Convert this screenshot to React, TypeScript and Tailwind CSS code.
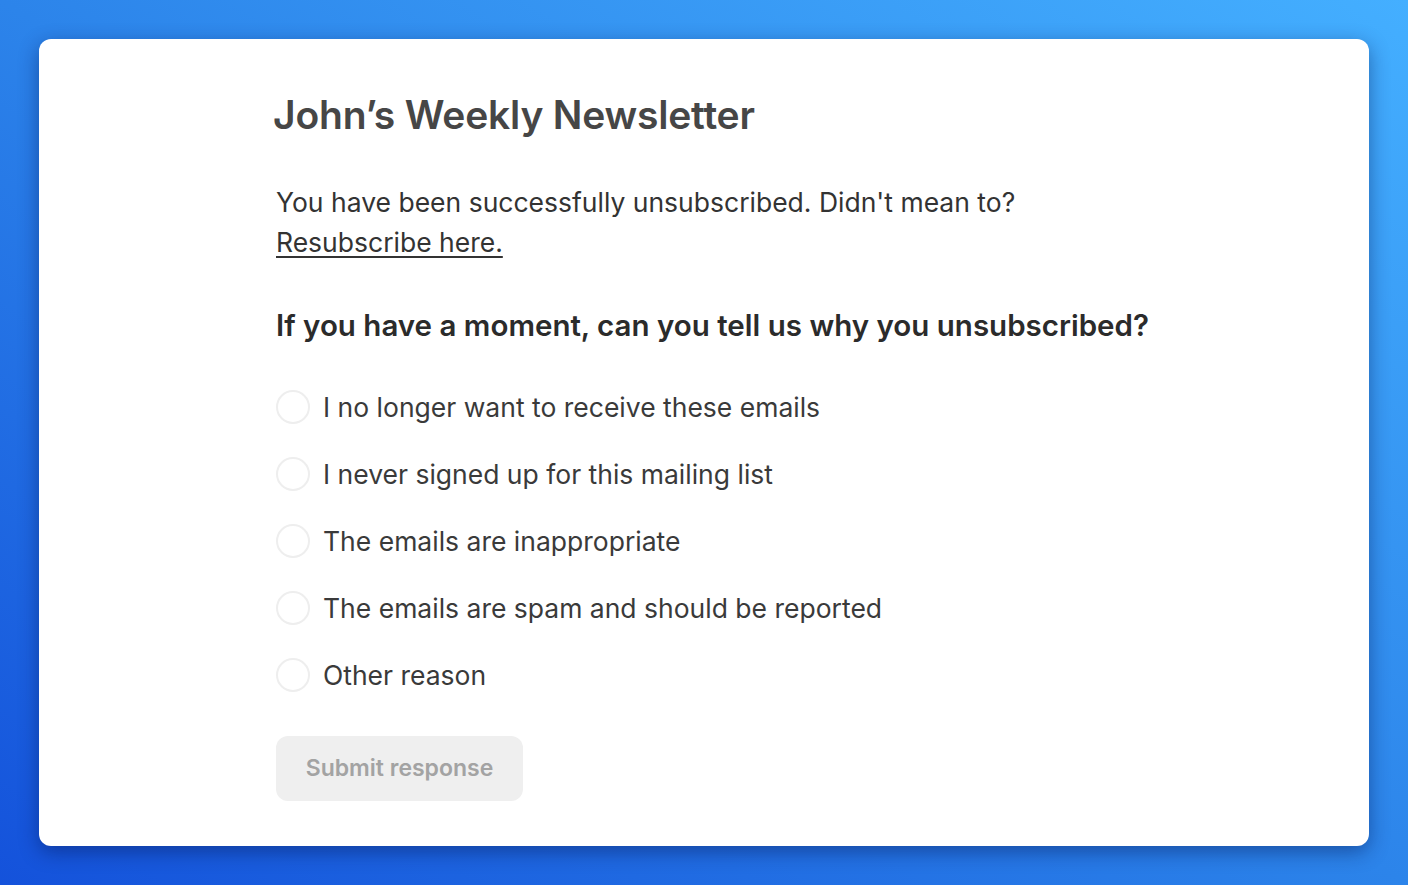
import React from "react";

const options = [
  "I no longer want to receive these emails",
  "I never signed up for this mailing list",
  "The emails are inappropriate",
  "The emails are spam and should be reported",
  "Other reason",
];

export default function App() {
  return (
    <div className="w-[1408px] h-[885px] bg-[linear-gradient(to_top_right,#1452db,#2c84ea_50%,#44afff)] pt-[39px] pl-[39px] font-['Inter','Noto_Sans',sans-serif]">
      <div className="w-[1330px] h-[807px] bg-white rounded-[12px] shadow-[0_6px_20px_rgba(5,20,80,0.45)] pl-[234px] pt-[52px]">
        <h1 className="text-[39px] leading-[48px] font-semibold text-[#464646] tracking-[-0.2px]">
          John’s Weekly Newsletter
        </h1>
        <p className="mt-[43px] ml-[3px] text-[26.5px] leading-[40px] text-[#333333]">
          You have been successfully unsubscribed. Didn't mean to?
          <br />
          <a className="underline underline-offset-[4px] decoration-[2px]" href="#">
            Resubscribe here.
          </a>
        </p>
        <h2 className="mt-[45px] ml-[3px] text-[29.5px] leading-[36px] font-semibold text-[#2b2b2b]">
          If you have a moment, can you tell us why you unsubscribed?
        </h2>
        <div className="mt-[47px] flex flex-col gap-[33px] ml-[3px]">
          {options.map((o) => (
            <label key={o} className="flex items-center gap-[13px] h-[34px]">
              <span className="w-[34px] h-[34px] rounded-full border-[2px] border-[#eeeeee] bg-white shrink-0" />
              <span className="text-[26.5px] leading-[34px] text-[#3a3a3a]">{o}</span>
            </label>
          ))}
        </div>
        <button className="mt-[44px] ml-[3px] w-[247px] h-[65px] rounded-[12px] bg-[#efefef] text-[23px] font-semibold text-[#a3a3a3]">
          Submit response
        </button>
      </div>
    </div>
  );
}
